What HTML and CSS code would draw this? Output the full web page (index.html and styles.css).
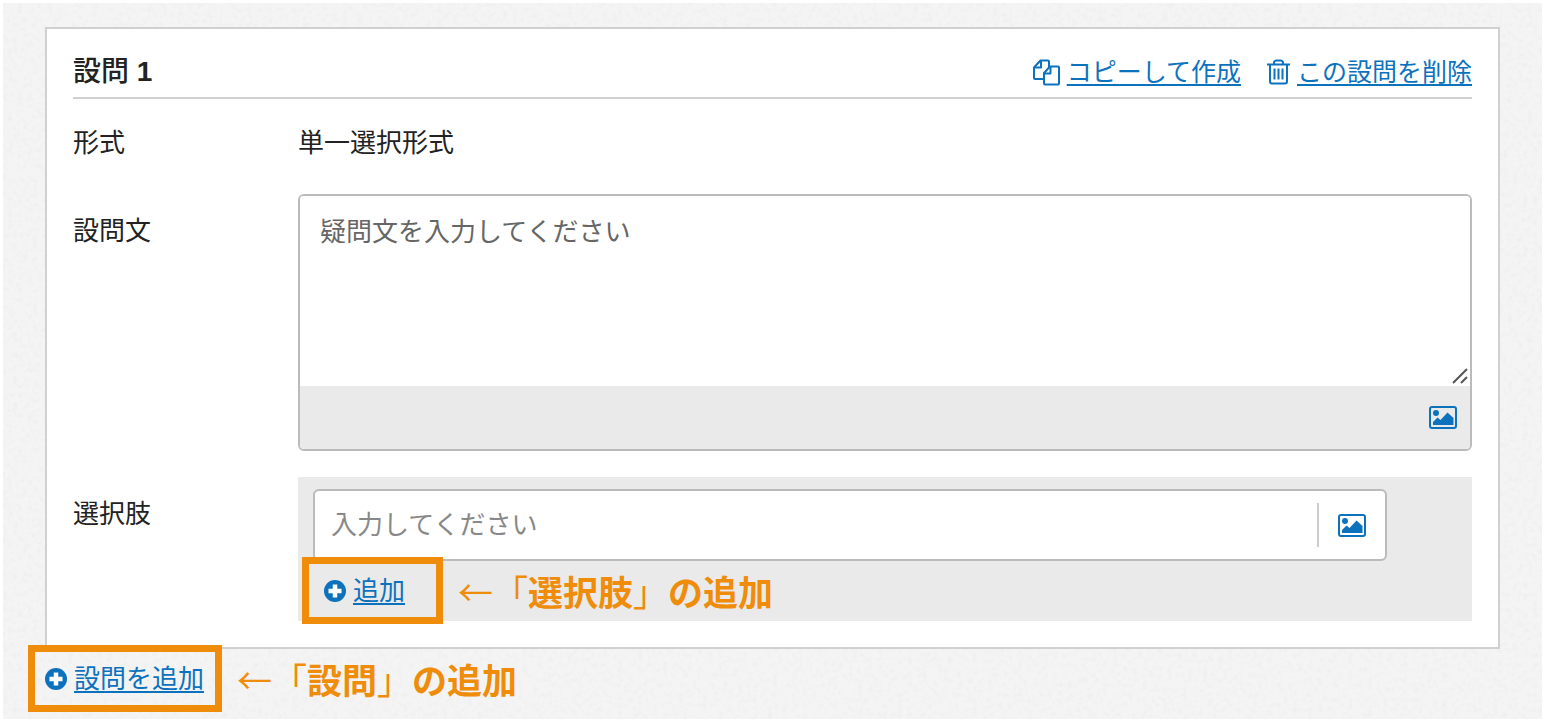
FILE: index.html
```html
<!DOCTYPE html>
<html lang="ja">
<head>
    <meta charset="UTF-8">
    <meta name="viewport" content="width=device-width, initial-scale=1.0">
    <title>設問の編集</title>
    <link rel="stylesheet" href="styles.css">
</head>
<body>

    <svg class="defs" width="0" height="0" aria-hidden="true">
        <symbol id="icon-image" viewBox="0 0 28 23">
            <rect x="1" y="1" width="26" height="21" rx="2" fill="none" stroke="currentColor" stroke-width="2"/>
            <circle cx="7" cy="7" r="3" fill="currentColor"/>
            <path d="M4 19V16l4.500-4.500 3 2.500L18.500 6.500 24.500 12V19z" fill="currentColor"/>
        </symbol>
        <symbol id="icon-plus" viewBox="0 0 22 22">
            <circle cx="11" cy="11" r="11" fill="currentColor"/>
            <path d="M11 4.500v13M4.500 11h13" stroke="#fff" stroke-width="4.500"/>
        </symbol>
    </svg>

    <main class="page">
        <svg class="grain" aria-hidden="true">
            <filter id="paper" x="0" y="0" width="100%" height="100%">
                <feTurbulence type="fractalNoise" baseFrequency="0.2" numOctaves="3" seed="4"/>
                <feColorMatrix values="0 0 0 0 0.45  0 0 0 0 0.45  0 0 0 0 0.45  0.2 0 0 0 -0.09"/>
            </filter>
            <rect width="100%" height="100%" filter="url(#paper)"/>
        </svg>

        <section class="panel">
            <header class="panel-header">
                <h2>設問 <b>1</b></h2>
                <nav class="actions">
                    <a href="#">
                        <svg width="27" height="27" viewBox="0 0 27 27" fill="none" stroke="currentColor" stroke-width="2" stroke-linejoin="round" aria-hidden="true">
                            <path d="M10 20H2Q1 20 1 19V8.500L7.500 1.500H15Q16 1.500 16 2.500V8"/>
                            <path d="M8 1.500V8.500H1.500"/>
                            <path d="M17 7.500H25Q26 7.500 26 8.500V24.500Q26 25.500 25 25.500H12Q11 25.500 11 24.500V14z"/>
                            <path d="M17.500 7.500v7h-7"/>
                        </svg>
                        <span>コピーして作成</span>
                    </a>
                    <a href="#">
                        <svg width="23" height="26" viewBox="0 0 23 26" fill="none" stroke="currentColor" stroke-width="2" aria-hidden="true">
                            <path d="M0 5.500h23M7 5V3.500Q7.500 1.500 9.500 1.500h4Q15.500 1.500 16 3.500V5"/>
                            <path d="M3 6v16.500Q3 24.500 5 24.500h13Q20 24.500 20 22.500V6"/>
                            <path d="M7.500 9.500v11M11.500 9.500v11M15.500 9.500v11"/>
                        </svg>
                        <span>この設問を削除</span>
                    </a>
                </nav>
            </header>

            <div class="row">
                <span class="label">形式</span>
                <div class="value">単一選択形式</div>
            </div>

            <div class="row">
                <label class="label" for="question">設問文</label>
                <div class="editor">
                    <textarea id="question" placeholder="疑問文を入力してください"></textarea>
                    <svg class="grip" width="18" height="18" viewBox="0 0 18 18" stroke="#555" stroke-width="2" aria-hidden="true">
                        <path d="M2 16 16 2M10 16l6-6"/>
                    </svg>
                    <div class="toolbar">
                        <button type="button" class="image-button" aria-label="画像"><svg width="28" height="23"><use href="#icon-image"/></svg></button>
                    </div>
                </div>
            </div>

            <div class="row">
                <label class="label" for="choice">選択肢</label>
                <div class="choices">
                    <div class="choice">
                        <input type="text" id="choice" placeholder="入力してください">
                        <button type="button" class="image-button" aria-label="画像"><svg width="28" height="23"><use href="#icon-image"/></svg></button>
                    </div>
                    <div class="add-row">
                        <a href="#" class="add add-choice"><svg width="22" height="22" aria-hidden="true"><use href="#icon-plus"/></svg><span>追加</span></a>
                        <p class="note"><i>←「</i>選択肢<i>」</i>の追加</p>
                    </div>
                </div>
            </div>
        </section>

        <div class="add-row">
            <a href="#" class="add"><svg width="22" height="22" aria-hidden="true"><use href="#icon-plus"/></svg><span>設問を追加</span></a>
            <p class="note"><i>←「</i>設問<i>」</i>の追加</p>
        </div>
    </main>

</body>
</html>
```
FILE: styles.css
```css
* {
    box-sizing: border-box;
}
body {
    margin: 3px 6px 6px 3px;
    background-color: #fff;
    color: #222;
    font-family: "Liberation Sans", "Noto Sans CJK JP", sans-serif;
    font-size: 26px;
    line-height: 40px;
}
a {
    color: #0d72bd;
    text-decoration: none;
}
a span {
    text-decoration: underline;
    text-decoration-thickness: 2px;
    text-underline-offset: 3px;
}
.defs {
    position: absolute;
}
.page {
    position: relative;
    padding: 24px 42px 10px;
    background-color: #f4f4f4;
}
.grain {
    position: absolute;
    top: 0;
    left: 0;
    width: 100%;
    height: 100%;
}
.panel {
    position: relative;
    padding: 0 26px 26px;
    background-color: #fff;
    border: 2px solid #d0d0d0;
}
.panel-header {
    display: flex;
    justify-content: space-between;
    align-items: center;
    height: 70px;
    padding-top: 18px;
    margin-bottom: 24px;
    border-bottom: 2px solid #d0d0d0;
}
h2 {
    margin: 0;
    font-family: "Liberation Sans", "Noto Sans CJK JP Medium", "Noto Sans CJK JP", sans-serif;
    font-size: 28px;
    font-weight: 500;
}
.actions {
    display: flex;
    gap: 26px;
    font-size: 25px;
}
.actions a {
    display: flex;
    align-items: center;
    gap: 7px;
}
.row {
    display: flex;
    align-items: flex-start;
}
.label {
    flex: 0 0 225px;
}
.row + .row .label {
    padding-top: 17px;
}
.value {
    flex: 1;
    margin-bottom: 31px;
}
.editor {
    position: relative;
    flex: 1;
    margin-bottom: 26px;
    border: 2px solid #bbb;
    border-radius: 6px;
    overflow: hidden;
}
textarea {
    display: block;
    width: 100%;
    height: 190px;
    padding: 16px 20px;
    border: none;
    outline: none;
    resize: none;
    font: inherit;
}
textarea::placeholder {
    color: #666;
}
.grip {
    position: absolute;
    right: 1px;
    top: 171px;
}
.toolbar {
    display: flex;
    justify-content: flex-end;
    align-items: center;
    height: 63px;
    padding-right: 13px;
    background-color: #eaeaea;
}
.image-button {
    display: flex;
    padding: 0;
    border: none;
    background: none;
    color: #0d72bd;
    cursor: pointer;
}
.choices {
    flex: 1;
    padding: 12px 85px 0 15px;
    background-color: #eaeaea;
}
.choice {
    display: flex;
    align-items: center;
    height: 72px;
    padding: 0 19px 0 16px;
    border: 2px solid #bbb;
    border-radius: 6px;
    background-color: #fff;
}
.choice input {
    flex: 1;
    height: 44px;
    padding: 0;
    margin-right: 19px;
    border: none;
    border-right: 2px solid #ccc;
    outline: none;
    font: inherit;
}
.choice input::placeholder {
    color: #888;
}
.add-row {
    position: relative;
    display: flex;
    align-items: center;
    height: 60px;
}
.add {
    position: relative;
    display: flex;
    align-items: center;
    gap: 7px;
    margin-right: 33px;
}
.add-choice {
    margin-left: 11px;
    margin-right: 53px;
}
/* orange frame round the link */
.add::after {
    content: "";
    position: absolute;
    top: -14px;
    right: -18px;
    bottom: -13px;
    left: -17px;
    border: 7px solid #ef8c0a;
}
.add-choice::after {
    right: -38px;
    left: -22px;
}
.note {
    margin: 0;
    color: #ef8c0a;
    font-family: "Noto Sans CJK JP", sans-serif;
    font-size: 35px;
    font-weight: bold;
}
.note i {
    font-style: normal;
    font-weight: normal;
}
```
